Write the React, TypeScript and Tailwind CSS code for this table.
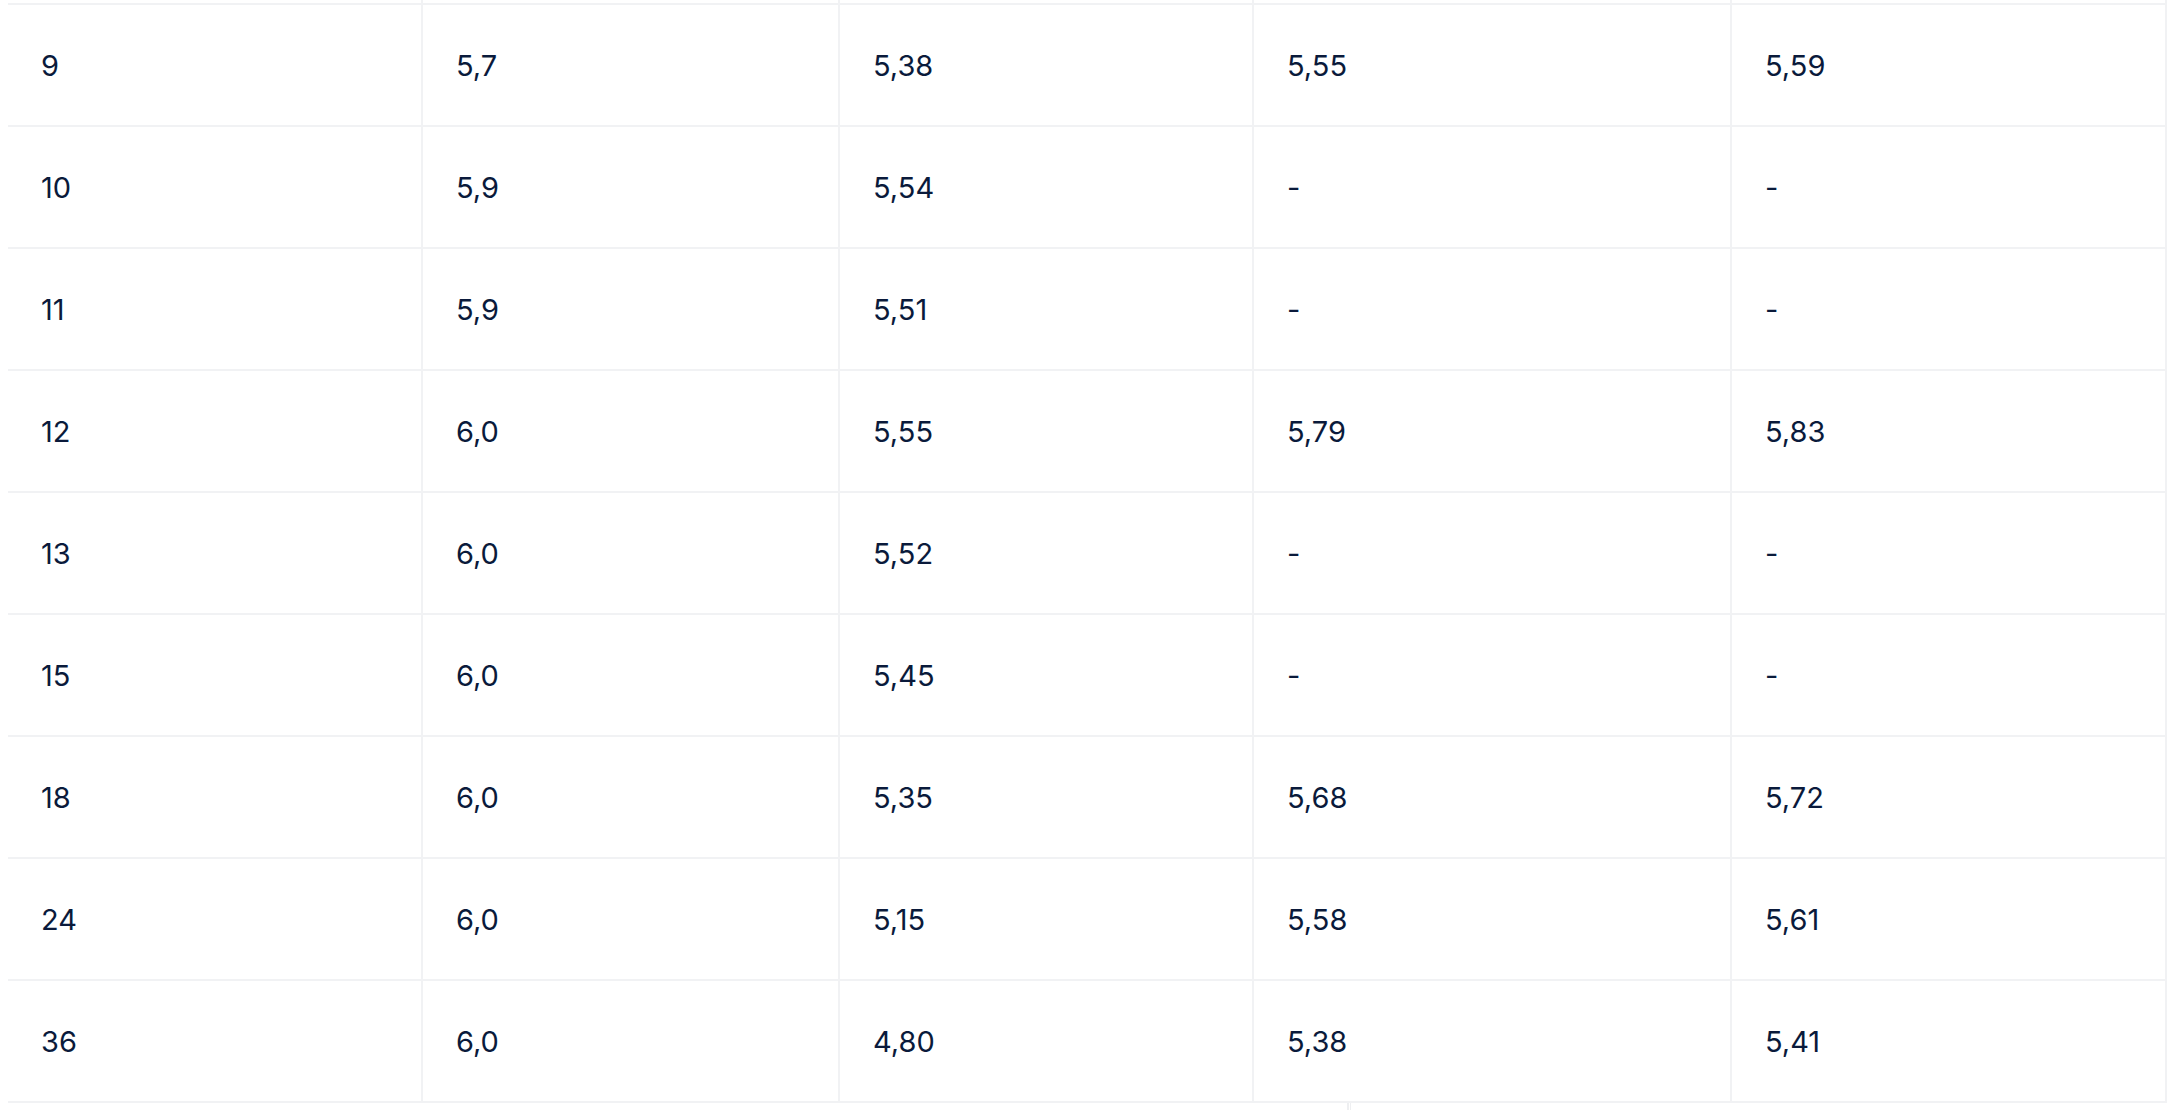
import React from "react";

const rows: string[][] = [
  ["9", "5,7", "5,38", "5,55", "5,59"],
  ["10", "5,9", "5,54", "-", "-"],
  ["11", "5,9", "5,51", "-", "-"],
  ["12", "6,0", "5,55", "5,79", "5,83"],
  ["13", "6,0", "5,52", "-", "-"],
  ["15", "6,0", "5,45", "-", "-"],
  ["18", "6,0", "5,35", "5,68", "5,72"],
  ["24", "6,0", "5,15", "5,58", "5,61"],
  ["36", "6,0", "4,80", "5,38", "5,41"],
];

function Cell({ children }: { children?: React.ReactNode }) {
  return (
    <div className="flex items-center pl-[33px] border-r-2 border-[#f1f2f4]">
      {children}
    </div>
  );
}

export default function App() {
  return (
    <div
      className="w-[2178px] h-[1110px] overflow-hidden bg-white text-[29px] font-[430] leading-none text-[#0a1a3b]"
      style={{ fontFamily: "Inter, 'Noto Sans', sans-serif" }}
    >
      <div className="ml-[8px] w-[2159px]">
        <div className="grid grid-cols-[415px_417px_414px_478px_435px] h-[5px] border-b-2 border-[#f1f2f4]">
          <div className="border-r-2 border-[#f1f2f4]" />
          <div className="border-r-2 border-[#f1f2f4]" />
          <div className="border-r-2 border-[#f1f2f4]" />
          <div className="border-r-2 border-[#f1f2f4]" />
          <div className="border-r-2 border-[#f1f2f4]" />
        </div>
        {rows.map((r, i) => (
          <div
            key={i}
            className="grid grid-cols-[415px_417px_414px_478px_435px] h-[122px] border-b-2 border-[#f1f2f4]"
          >
            {r.map((v, j) => (
              <Cell key={j}>
                <span>{v}</span>
              </Cell>
            ))}
          </div>
        ))}
        <div className="ml-[1339px] w-[4px] h-[8px] border-l-2 border-r border-[#eeeff1]" />
      </div>
    </div>
  );
}
